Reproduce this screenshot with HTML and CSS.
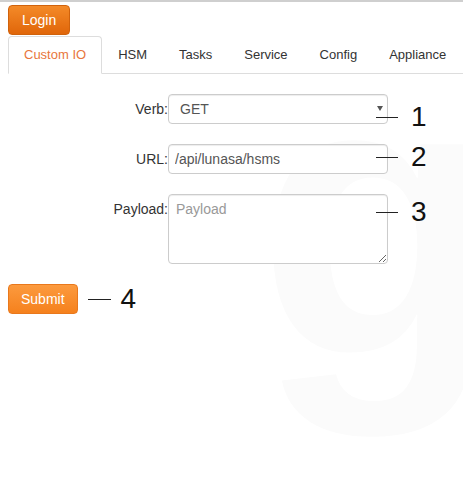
FILE: index.html
```html
<!DOCTYPE html>
<html>
<head>
<meta charset="utf-8">
<link rel="stylesheet" href="styles.css">
</head>
<body>
<div class="topbar"></div>
<div class="watermark">g</div>
<div class="page">
  <button class="btn btn-login" type="button">Login</button>
  <ul class="tabs">
    <li class="tab active"><a>Custom IO</a></li>
    <li class="tab"><a>HSM</a></li>
    <li class="tab"><a>Tasks</a></li>
    <li class="tab"><a>Service</a></li>
    <li class="tab"><a>Config</a></li>
    <li class="tab"><a>Appliance</a></li>
  </ul>
  <form class="form">
    <div class="row">
      <label class="lbl">Verb:</label>
      <div class="ctrl">
        <select class="field select"><option>GET</option><option>POST</option><option>PUT</option><option>DELETE</option></select>
        <span class="caret"></span>
      </div>
      <div class="note note-1"><span class="dash"></span><span class="num">1</span></div>
    </div>
    <div class="row">
      <label class="lbl">URL:</label>
      <div class="ctrl"><input class="field" type="text" value="/api/lunasa/hsms"></div>
      <div class="note note-2"><span class="dash"></span><span class="num">2</span></div>
    </div>
    <div class="row">
      <label class="lbl">Payload:</label>
      <div class="ctrl"><textarea class="field area" placeholder="Payload"></textarea></div>
      <div class="note note-3"><span class="dash"></span><span class="num">3</span></div>
    </div>
  </form>
  <div class="submit-row">
    <button class="btn btn-submit" type="button">Submit</button>
    <span class="dash dash-4"></span><span class="num">4</span>
  </div>
</div>
</body>
</html>
```
FILE: styles.css
```css
html, body {
  margin: 0;
  padding: 0;
  background: #fff;
}
body {
  font-family: "Liberation Sans", Arial, sans-serif;
  font-size: 14px;
  color: #333;
  position: relative;
  height: 477px;
  overflow: hidden;
}
.topbar {
  height: 2px;
  background: #cfcfcf;
}
.watermark {
  position: absolute;
  left: 257px;
  top: 19px;
  font-family: "Liberation Sans", Arial, sans-serif;
  font-weight: bold;
  font-size: 395px;
  line-height: 395px;
  color: #fbfbfb;
  z-index: 0;
  pointer-events: none;
}
.page {
  position: relative;
  z-index: 1;
  padding: 3px 0 0 8px;
  overflow: hidden;
}
.btn {
  display: block;
  font-family: "Liberation Sans", Arial, sans-serif;
  font-size: 14px;
  line-height: 20px;
  color: #fff;
  border-radius: 4px;
  cursor: pointer;
}
.btn-login {
  padding: 4px 13px;
  background: linear-gradient(#f48a28, #e0660a);
  border: 1px solid #d0620c;
}
.tabs {
  list-style: none;
  margin: 1px 0 0 0;
  padding: 0;
  display: flex;
  flex-wrap: nowrap;
  border-bottom: 1px solid #ddd;
}
.tab {
  flex: 0 0 auto;
  margin-bottom: -1px;
  white-space: nowrap;
}
.tab a {
  display: block;
  padding: 8px 15px;
  font-size: 13px;
  line-height: 20px;
  border: 1px solid transparent;
  border-radius: 4px 4px 0 0;
  color: #333;
}
.tab.active a {
  color: #e8763c;
  background: #fff;
  border-color: #ddd #ddd transparent;
}
.form {
  margin: 20px 0 0 0;
}
.row {
  position: relative;
  display: flex;
  align-items: flex-start;
  margin-bottom: 20px;
}
.lbl {
  width: 160px;
  text-align: right;
  line-height: 30px;
  color: #333;
}
.ctrl {
  position: relative;
  width: 220px;
}
.field {
  display: block;
  box-sizing: border-box;
  width: 220px;
  height: 30px;
  margin: 0;
  padding: 5px 6px;
  font-family: "Liberation Sans", Arial, sans-serif;
  font-size: 14px;
  color: #555;
  background: #fff;
  border: 1px solid #ccc;
  border-radius: 4px;
  box-shadow: inset 0 1px 1px rgba(0,0,0,0.075);
  outline: none;
}
.select {
  appearance: none;
  -webkit-appearance: none;
  padding-left: 11px;
}
.caret {
  position: absolute;
  right: 5px;
  top: 12px;
  width: 0;
  height: 0;
  border-left: 3px solid transparent;
  border-right: 3px solid transparent;
  border-top: 5px solid #555;
}
.area {
  height: 70px;
  padding: 6px 7px;
  resize: vertical;
}
.area::placeholder {
  color: #999;
}
.note {
  position: absolute;
  left: 368px;
  display: flex;
  align-items: center;
  height: 28px;
}
.note-1 { top: 9px; }
.note-2 { top: -1px; }
.note-3 { top: 4px; }
.dash {
  display: block;
  width: 22px;
  height: 1px;
  background: #222;
}
.num {
  display: block;
  margin-left: 13px;
  font-family: "Liberation Sans", Arial, sans-serif;
  font-size: 28px;
  line-height: 28px;
  color: #111;
}
.submit-row {
  display: flex;
  align-items: center;
  margin-top: 1px;
}
.btn-submit {
  padding: 4px 12px;
  background: linear-gradient(#fc9a3e, #f5811d);
  border: 1px solid #e9781c;
}
.dash-4 {
  width: 23px;
  margin-left: 10px;
}
.submit-row .num {
  margin-left: 10px;
}
```
